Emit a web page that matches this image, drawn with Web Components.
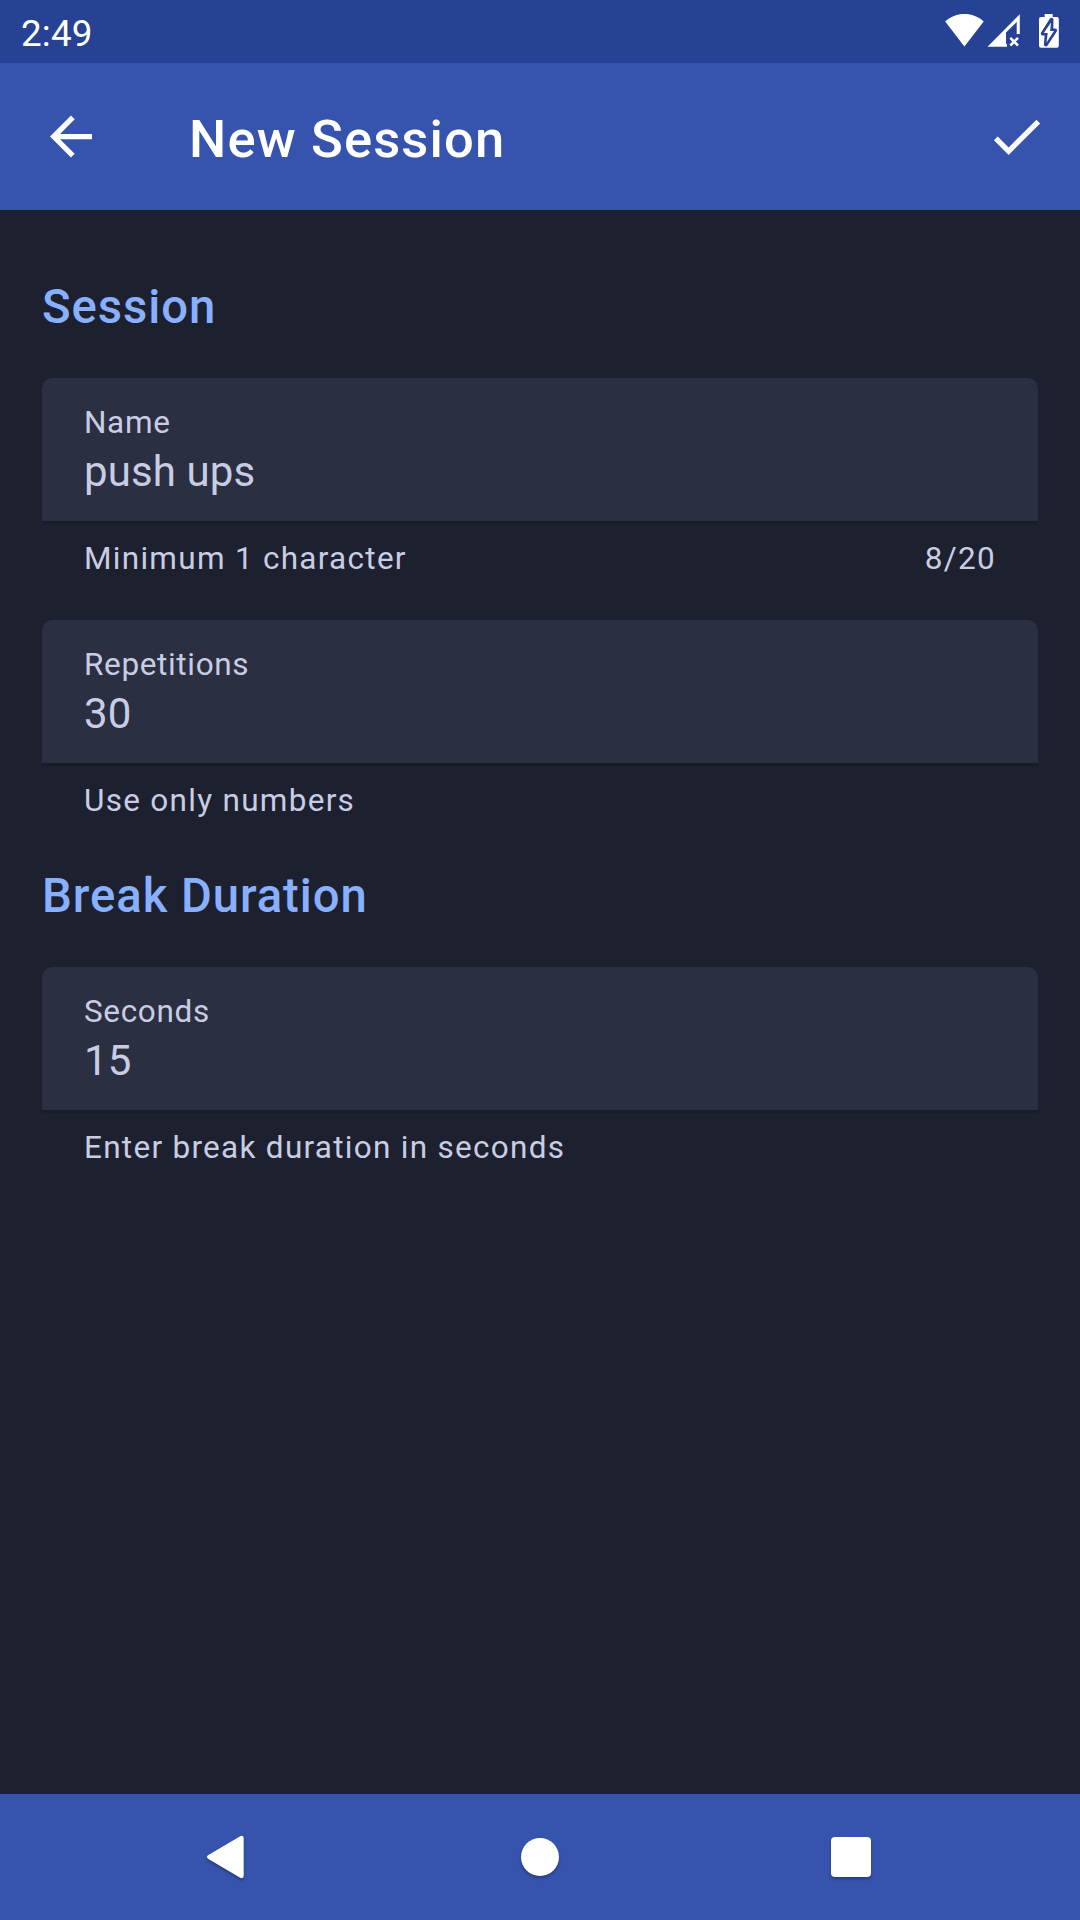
<!DOCTYPE html>
<html lang="en">
<head>
<meta charset="utf-8">
<title>New Session</title>
<style>
html, body { margin: 0; height: 100%; }
body { background: #1d202e; font-family: Roboto, sans-serif; overflow: hidden; }
</style>
</head>
<body>
<session-screen></session-screen>
<script>
const define = (name, html) => customElements.define(name, class extends HTMLElement {
  constructor() {
    super();
    const t = document.createElement('template');
    t.innerHTML = html;
    this.attachShadow({ mode: 'open' }).append(t.content.cloneNode(true));
  }
});

define('status-bar', `
<style>
:host { display: flex; justify-content: space-between; height: 63px; background: #274195; color: #fff; box-sizing: border-box; padding: 12px 20px 0 21px; }
span { font-size: 36.75px; line-height: 43px; letter-spacing: .2px; }
div { display: flex; gap: 3px; }
svg { display: block; fill: #fff; }
.bat { margin-left: 16px; }
</style>
<span><slot></slot></span>
<div>
  <svg width="40" height="37" viewBox="0 0 40 37"><path d="M1.200 9.600C6.500 4.500 13 2 20.400 2S34.300 4.500 39.700 9.600L20.400 34.500Z"/></svg>
  <svg width="33" height="37" viewBox="0 0 33 37"><path d="M.5 34.700L32.800 2.300V22H29.700V10L19 20.500V31.500L20 32.500V34.700Z"/><path d="M23.300 25.800L31 33.500M31 25.800L23.300 33.500" stroke="#fff" stroke-width="2.500"/></svg>
  <svg class="bat" width="21" height="37" viewBox="0 0 21 37"><path d="M5.700 2H13.700V5H17.800Q19.800 5 19.800 7V33.800Q19.800 35.800 17.800 35.800H2Q0 35.800 0 33.800V7Q0 5 2 5H5.700Z"/><path d="M12.500 7.800L3.800 21.500H7.800L6.900 32.400L16.100 18.400H12.200Z" stroke="#274195" stroke-width="4" stroke-linejoin="round"/><path d="M12 10.500L4.800 21H8.700L7.500 30.500L15 19H11.200Z"/></svg>
</div>`);

define('app-bar', `
<style>
:host { display: flex; align-items: center; height: 147px; box-sizing: border-box; padding: 0 32px 1px 40px; background: #3654ad; color: #fff; }
svg { display: block; fill: #fff; width: 63px; height: 63px; }
h1 { flex: 1; margin: 5px 0 0 86px; font-size: 52.5px; line-height: 62px; font-weight: 500; letter-spacing: 1.15px; }
</style>
<svg viewBox="0 0 24 24"><path d="M19.800 11H7.630l5.590-5.590L11.800 4l-8 8 8 8 1.410-1.410L7.630 13H19.800z"/></svg>
<h1><slot></slot></h1>
<svg viewBox="0 0 24 24"><path d="M9 16.170L4.830 12l-1.420 1.410L9 19 21 7l-1.410-1.410z"/></svg>`);

define('section-title', `
<style>
:host { display: block; margin: 49px 0 43px; }
h2 { margin: 0; font-size: 47.25px; line-height: 56px; font-weight: 500; letter-spacing: .94px; color: #88b0ff; }
</style>
<h2><slot></slot></h2>`);

define('text-field', `
<style>
:host { display: block; color: #c9cde3; }
:host(.spaced) { margin-top: 43px; }
.box { height: 146px; box-sizing: border-box; padding: 26px 42px 0; background: #2b2f42; border-bottom: 3px solid #191c28; border-radius: 10.5px 10.5px 0 0; display: flex; flex-direction: column; gap: 6px; }
.label { font-size: 31.5px; line-height: 37px; letter-spacing: .65px; }
.value { font-size: 42px; line-height: 49px; letter-spacing: .1px; }
.help { display: flex; justify-content: space-between; padding: 16px 42px 0; font-size: 31.5px; line-height: 37px; letter-spacing: 1.28px; }
</style>
<div class="box"><div class="label"><slot name="label"></slot></div><div class="value"><slot></slot></div></div>
<div class="help"><slot name="helper"></slot><slot name="counter"></slot></div>`);

define('nav-bar', `
<style>
:host { display: flex; justify-content: space-around; height: 126px; padding: 0 70px; background: #3654ad; }
svg { display: block; width: 126px; height: 126px; fill: #fff; filter: drop-shadow(0 2px 1.5px rgba(0,0,0,.3)); }
</style>
<svg viewBox="0 0 126 126"><path d="M44.800 60.800L75.800 42.400Q79.700 40.700 79.700 44.400V81.600Q79.700 85.300 75.800 83.600L44.800 65.200Q41 63 44.800 60.800Z"/></svg>
<svg viewBox="0 0 126 126"><circle cx="63" cy="63" r="19"/></svg>
<svg viewBox="0 0 126 126"><rect x="41" y="43" width="40" height="40" rx="4"/></svg>`);

define('session-screen', `
<style>
:host { display: flex; flex-direction: column; width: 1080px; height: 1920px; background: #1d202e; }
main { flex: 1; padding: 20px 42px 0; display: flex; flex-direction: column; }
</style>
<status-bar>2:49</status-bar>
<app-bar>New Session</app-bar>
<main>
  <section-title>Session</section-title>
  <text-field><span slot="label">Name</span>push ups<span slot="helper">Minimum 1 character</span><span slot="counter">8/20</span></text-field>
  <text-field class="spaced"><span slot="label">Repetitions</span>30<span slot="helper">Use only numbers</span></text-field>
  <section-title>Break Duration</section-title>
  <text-field><span slot="label">Seconds</span>15<span slot="helper">Enter break duration in seconds</span></text-field>
</main>
<nav-bar></nav-bar>`);
</script>
</body>
</html>
